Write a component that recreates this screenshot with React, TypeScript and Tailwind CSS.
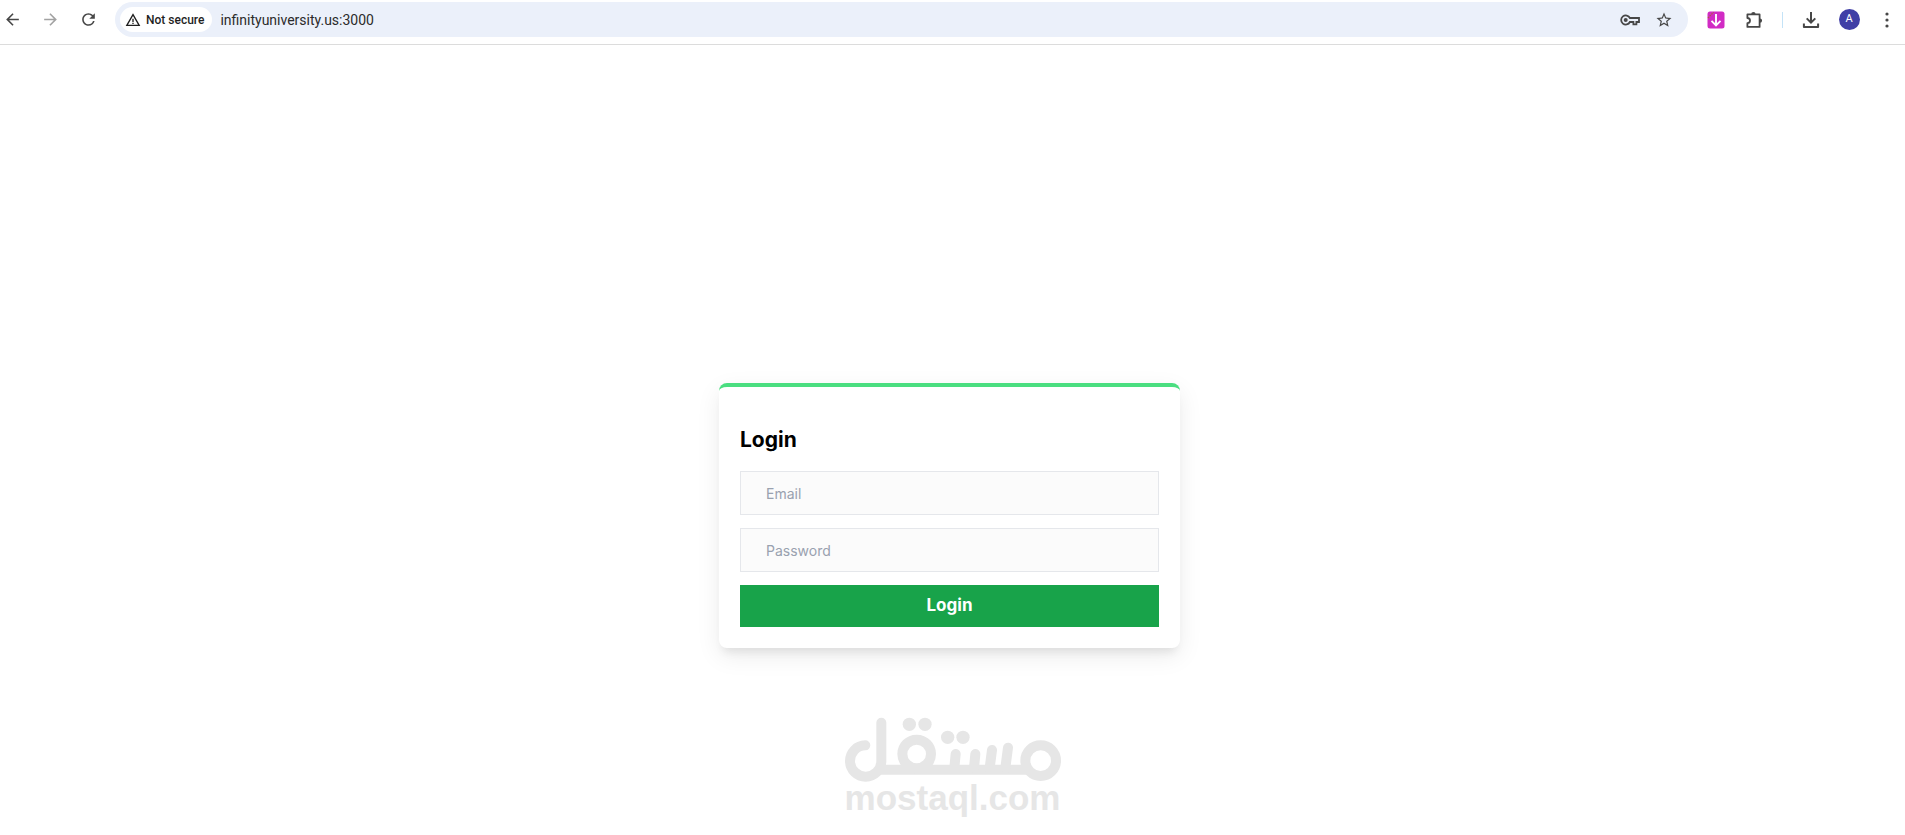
import type { ReactNode } from "react";
import { useState } from "react";
import { MdArrowBack, MdArrowForward, MdRefresh, MdStarBorder, MdWarningAmber } from "react-icons/md";

interface IconButtonProps {
  label: string;
  className?: string;
  children: ReactNode;
}

function IconButton({ label, className = "", children }: IconButtonProps) {
  return (
    <button
      type="button"
      aria-label={label}
      className={`flex h-6 w-6 shrink-0 items-center justify-center text-[#474747] ${className}`}
    >
      {children}
    </button>
  );
}

function KeyIcon() {
  return (
    <svg width="20" height="12" viewBox="0 0 20 12" fill="none" stroke="currentColor" strokeWidth="1.8">
      <path d="M9.9 4A4.6 4.6 0 1 0 9.9 8H13.4V10.4H16.4V8H19V4Z" />
      <circle cx="5.7" cy="6" r="2" fill="currentColor" stroke="none" />
    </svg>
  );
}

function PuzzleIcon() {
  return (
    <svg width="18" height="18" viewBox="0 0 18 18" fill="none" stroke="currentColor" strokeWidth="1.8">
      <path d="M2.4 3.4H14.6V15.9H2.4V12.2A2.6 2.6 0 0 0 2.4 7Z" strokeLinejoin="round" />
      <path d="M6.2 3.2A2.2 2.2 0 0 1 10.6 3.2ZM14.9 7.4A2.2 2.2 0 0 1 14.9 11.8Z" fill="currentColor" stroke="none" />
    </svg>
  );
}

function DownloadIcon() {
  return (
    <svg width="18" height="18" viewBox="0 0 18 18" fill="none" stroke="currentColor" strokeWidth="2">
      <path d="M9 1V11.4M4.7 7.4L9 11.7L13.3 7.4" />
      <path d="M1.9 12.4V16H16.1V12.4" strokeLinejoin="round" />
    </svg>
  );
}

function DownloaderIcon() {
  return (
    <svg width="18" height="18" viewBox="0 0 18 18" fill="none">
      <rect x="0.5" y="0.5" width="17" height="17" rx="2.5" fill="#d12bc4" />
      <path d="M1 7L6.5 1.2" stroke="#b0603c" strokeWidth="1.2" strokeDasharray="1.5 1" />
      <path d="M9 3V14M4.5 9.8L9 14.3L13.5 9.8" stroke="#fff" strokeWidth="1.9" />
    </svg>
  );
}

function MoreIcon() {
  return (
    <svg width="4" height="18" viewBox="0 0 4 18" fill="currentColor">
      <circle cx="2" cy="3" r="1.6" />
      <circle cx="2" cy="9" r="1.6" />
      <circle cx="2" cy="15" r="1.6" />
    </svg>
  );
}

function BrowserBar() {
  const [url, setUrl] = useState("infinityuniversity.us:3000");

  return (
    <header className="flex items-center border-b border-[#dcdcdc] bg-white pt-0.5 pb-[7px]">
      <nav className="flex items-center gap-[14px]">
        <IconButton label="Back">
          <MdArrowBack size={19} />
        </IconButton>
        <IconButton label="Forward" className="opacity-50">
          <MdArrowForward size={19} />
        </IconButton>
        <IconButton label="Reload">
          <MdRefresh size={19} />
        </IconButton>
      </nav>

      <div className="ml-[15px] flex h-[35px] flex-1 items-center rounded-full bg-[#ebf0fa] pr-3 pl-[5px]">
        <button
          type="button"
          className="flex h-[25px] shrink-0 items-center gap-[5px] rounded-full bg-white pr-2 pl-[5px] font-['Roboto',sans-serif] text-[12px] font-medium text-[#1f1f1f]"
        >
          <MdWarningAmber size={16} />
          Not secure
        </button>
        <input
          type="text"
          aria-label="Address"
          value={url}
          onChange={(e) => setUrl(e.target.value)}
          className="ml-2 h-[25px] min-w-0 flex-1 bg-transparent font-['Roboto',sans-serif] text-[14px] text-[#2b2b2b] outline-none"
        />
        <div className="flex items-center gap-[10px]">
          <IconButton label="Passwords">
            <KeyIcon />
          </IconButton>
          <IconButton label="Bookmark">
            <MdStarBorder size={18} />
          </IconButton>
        </div>
      </div>

      <div className="ml-4 flex items-center gap-[14px] pr-1.5">
        <IconButton label="Video downloader">
          <DownloaderIcon />
        </IconButton>
        <IconButton label="Extensions">
          <PuzzleIcon />
        </IconButton>
        <span className="mx-0.5 h-4 w-px bg-[#c4e3f7]" />
        <IconButton label="Downloads">
          <DownloadIcon />
        </IconButton>
        <button type="button" className="flex w-6 justify-center">
          <span className="flex h-[21px] w-[21px] items-center justify-center rounded-full bg-[#403fa6] font-['Roboto',sans-serif] text-[11px] text-white">
            A
          </span>
        </button>
        <IconButton label="Menu">
          <MoreIcon />
        </IconButton>
      </div>
    </header>
  );
}

function LoginCard() {
  const [email, setEmail] = useState("");
  const [password, setPassword] = useState("");

  return (
    <form
      onSubmit={(e) => e.preventDefault()}
      className="flex w-full max-w-[461px] flex-col rounded-lg border-t-4 border-[#4ade80] bg-white p-[21px] shadow-[0_8px_24px_rgba(0,0,0,0.08),0_8px_8px_-4px_rgba(0,0,0,0.08)]"
    >
      <h1 className="mt-[18px] mb-[17px] text-[21px] leading-7 font-bold text-black">Login</h1>
      <div className="flex flex-col gap-[13px]">
        <input
          type="email"
          aria-label="Email"
          placeholder="Email"
          value={email}
          onChange={(e) => setEmail(e.target.value)}
          className="h-11 border border-gray-200 bg-[#fbfbfb] px-[25px] text-[14px] text-gray-900 outline-none placeholder:text-gray-400"
        />
        <input
          type="password"
          aria-label="Password"
          placeholder="Password"
          value={password}
          onChange={(e) => setPassword(e.target.value)}
          className="h-11 border border-gray-200 bg-[#fbfbfb] px-[25px] text-[14px] text-gray-900 outline-none placeholder:text-gray-400"
        />
        <button type="submit" className="h-[42px] bg-[#18a34a] text-[17px] font-bold text-white">
          Login
        </button>
      </div>
    </form>
  );
}

function Watermark() {
  return (
    <div className="flex flex-col items-center text-[#e6e6e6]">
      <svg width="218" height="65" viewBox="40 52 654 195" fill="none" stroke="currentColor" strokeWidth="30" strokeLinecap="round">
        <path d="M104 137A47 47 0 1 0 152 184V69" />
        <path d="M150 210H590" />
        <circle cx="258" cy="163" r="43" />
        <circle cx="630" cy="183" r="46" />
        <path d="M375 163L371 205M434 163L430 205M484 151L477 205M532 144L524 205" />
        <g fill="currentColor" stroke="none">
          <circle cx="236" cy="74" r="20" />
          <circle cx="283" cy="74" r="20" />
          <circle cx="351" cy="113" r="20" />
          <circle cx="397" cy="113" r="20" />
        </g>
      </svg>
      <span className="font-['Liberation_Sans',sans-serif] text-[35px] leading-8 font-bold">mostaql.com</span>
    </div>
  );
}

export default function App() {
  return (
    <div className="min-h-screen bg-white font-['Inter',sans-serif]">
      <BrowserBar />
      <main className="flex justify-center px-4 pt-[338px] pr-[22px]">
        <LoginCard />
      </main>
      <footer className="pt-[69px]">
        <Watermark />
      </footer>
    </div>
  );
}
